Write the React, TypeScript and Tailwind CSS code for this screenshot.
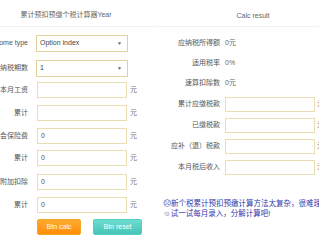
import React from 'react';

const font = "font-['Liberation_Sans','Noto_Sans_CJK_SC',sans-serif]";

const leftInputs = [
  { label: '本月工资', value: '', mt: 'mt-[5px]' },
  { label: '累计', value: '', mt: 'mt-[7px]' },
  { label: '社会保险费', value: '0', mt: 'mt-[7px]' },
  { label: '累计', value: '0', mt: 'mt-[6px]' },
  { label: '专项附加扣除', value: '0', mt: 'mt-[8px]' },
  { label: '累计', value: '0', mt: 'mt-[7px]' },
];

const results = [
  { label: '应纳税所得额', value: '0元' },
  { label: '适用税率', value: '0%' },
  { label: '速算扣除数', value: '0元' },
];

const resultInputs = ['累计应缴税款', '已缴税款', '应补（退）税款', '本月税后收入'];

function SelectBox({ label, value, className }: { label: string; value: string; className?: string }) {
  return (
    <div className={`flex items-center ${className ?? ''}`}>
      <div className="w-[50px] flex justify-end whitespace-nowrap text-[7px] text-[#555]">{label}</div>
      <div className="ml-[8px] w-[92px] h-[17px] border border-[#e2cf9e] bg-white flex items-center justify-between px-[3px]">
        <span className="text-[7px] text-[#444]">{value}</span>
        <span className="text-[5px] text-[#666] mr-[2px]">▼</span>
      </div>
    </div>
  );
}

export default function App() {
  return (
    <div className={`w-[319px] h-[240px] overflow-hidden bg-white flex ${font}`}>
      {/* Left: calculator form */}
      <div className="ml-[-22px] w-[176px] shrink-0 flex flex-col">
        <div className="h-[27px] flex items-center justify-center border-b border-[#f2f2f2] text-[7px] text-[#666] pt-[5px]">
          累计预扣预缴个税计算器Year
        </div>
        <SelectBox label="Income type" value="Option index" className="mt-[8px]" />
        <SelectBox label="纳税期数" value="1" className="mt-[8px]" />
        {leftInputs.map((row, i) => (
          <div key={i} className={`flex items-center ${row.mt}`}>
            <div className="w-[50px] flex justify-end whitespace-nowrap text-[7px] text-[#555]">{row.label}</div>
            <div className="ml-[9px] w-[90px] h-[16px] border border-[#ecdcb2] bg-white flex items-center px-[3px] text-[7px] text-[#555]">
              {row.value}
            </div>
            <span className="ml-[3px] text-[7px] text-[#777]">元</span>
          </div>
        ))}
        <div className="flex items-center mt-[6px] ml-[59px] gap-[12px]">
          <button className="w-[44px] h-[16px] rounded-[2px] border border-[#f5a623] bg-gradient-to-b from-[#ffab2e] to-[#ff8c00] text-white text-[7px]">
            Btn calc
          </button>
          <button className="w-[49px] h-[16px] rounded-[2px] border border-[#4fcfc2] bg-gradient-to-b from-[#6ddccf] to-[#45c4b7] text-white text-[7px]">
            Btn reset
          </button>
        </div>
      </div>

      {/* Right: results */}
      <div className="ml-[1px] w-[196px] shrink-0 flex flex-col">
        <div className="h-[27px] flex items-center justify-center border-b border-[#f2f2f2] text-[7px] text-[#666] pt-[6px]">
          Calc result
        </div>
        <div className="mt-[12px] flex flex-col gap-[12px]">
          {results.map((r) => (
            <div key={r.label} className="flex items-center h-[8px]">
              <div className="w-[65px] flex justify-end whitespace-nowrap text-[7px] text-[#555]">{r.label}</div>
              <span className="ml-[5px] text-[7px] text-[#666]">{r.value}</span>
            </div>
          ))}
        </div>
        <div className="mt-[10px] flex flex-col gap-[6px]">
          {resultInputs.map((label) => (
            <div key={label} className="flex items-center">
              <div className="w-[65px] flex justify-end whitespace-nowrap text-[7px] text-[#555]">{label}</div>
              <div className="ml-[5px] w-[90px] h-[15px] border border-[#ecdcb2] bg-white" />
              <span className="ml-[2px] text-[7px] text-[#777]">元</span>
            </div>
          ))}
        </div>
        <div className="mt-[24px] ml-[8px] w-[200px] text-[7.5px] leading-[9.5px] text-[#3338aa] whitespace-nowrap">
          <div>☹新个税累计预扣预缴计算方法太复杂，很难理解</div>
          <div>☺试一试每月录入，分解计算吧!</div>
        </div>
      </div>
    </div>
  );
}
